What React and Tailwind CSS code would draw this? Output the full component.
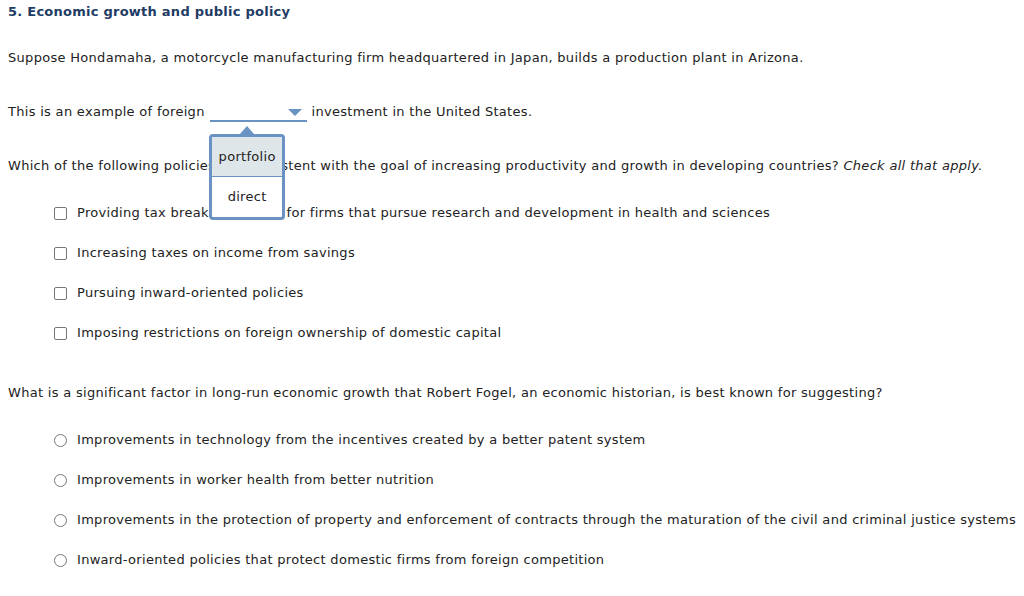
import clsx from 'clsx'

// ── Data ──────────────────────────────────────────────────────
const POLICIES = [
  'Providing tax breaks or grants for firms that pursue research and development in health and sciences',
  'Increasing taxes on income from savings',
  'Pursuing inward-oriented policies',
  'Imposing restrictions on foreign ownership of domestic capital',
]

const FACTORS = [
  'Improvements in technology from the incentives created by a better patent system',
  'Improvements in worker health from better nutrition',
  'Improvements in the protection of property and enforcement of contracts through the maturation of the civil and criminal justice systems',
  'Inward-oriented policies that protect domestic firms from foreign competition',
]

// ── Dropdown (open) ───────────────────────────────────────────
function Dropdown() {
  return (
    <span className="relative inline-block align-top h-[20px] w-[97px] border-b-2 border-[#6a93c4] ml-[1px]">
      <span className="absolute left-[78px] top-[7px] w-0 h-0 border-l-[7px] border-r-[7px] border-t-[7px] border-l-transparent border-r-transparent border-t-[#6a93c4]" />
      <span className="absolute left-[-1px] top-[32px] z-10 w-[76px] block">
        <span className="absolute left-[31px] top-[-8px] w-0 h-0 border-l-[7px] border-r-[7px] border-b-[8px] border-l-transparent border-r-transparent border-b-[#6a93c4]" />
        <span className="block bg-white border-[3px] border-[#6a93c4] rounded-[4px] overflow-hidden">
          <span className="flex h-[40px] items-center justify-center bg-[#dfe6ea] border-b border-[#6a93c4]">portfolio</span>
          <span className="flex h-[40px] items-center justify-center">direct</span>
        </span>
      </span>
    </span>
  )
}

function Choice({ label, type }) {
  return (
    <div className="flex items-center h-[20px] ml-[46px]">
      <span
        className={clsx(
          'w-[13px] h-[13px] border border-[#767676] bg-white shrink-0',
          type === 'radio' ? 'rounded-full' : 'rounded-[2px]'
        )}
      />
      <span className="ml-[10px] whitespace-nowrap">{label}</span>
    </div>
  )
}

export default function App() {
  return (
    <div className="bg-white min-h-[596px] w-[1024px] overflow-hidden px-[8px] pt-[2px] text-[13px] leading-[20px] tracking-[0.3px] text-[#222] font-['DejaVu_Sans',Verdana,sans-serif]">
      <h1 className="font-bold tracking-[0.25px] text-[#1e3c64]">5. Economic growth and public policy</h1>

      <p className="mt-[26px]">
        Suppose Hondamaha, a motorcycle manufacturing firm headquartered in Japan, builds a production plant in Arizona.
      </p>

      <p className="mt-[34px] whitespace-nowrap">
        This is an example of foreign <Dropdown /> investment in the United States.
      </p>

      <p className="mt-[34px] whitespace-nowrap">
        Which of the following policies are consistent with the goal of increasing productivity and growth in developing countries?{' '}
        <em>Check all that apply.</em>
      </p>

      <div className="mt-[27px] flex flex-col gap-[20px]">
        {POLICIES.map((p) => (
          <Choice key={p} label={p} type="checkbox" />
        ))}
      </div>

      <p className="mt-[40px] whitespace-nowrap">
        What is a significant factor in long-run economic growth that Robert Fogel, an economic historian, is best known for suggesting?
      </p>

      <div className="mt-[27px] flex flex-col gap-[20px]">
        {FACTORS.map((f) => (
          <Choice key={f} label={f} type="radio" />
        ))}
      </div>
    </div>
  )
}
